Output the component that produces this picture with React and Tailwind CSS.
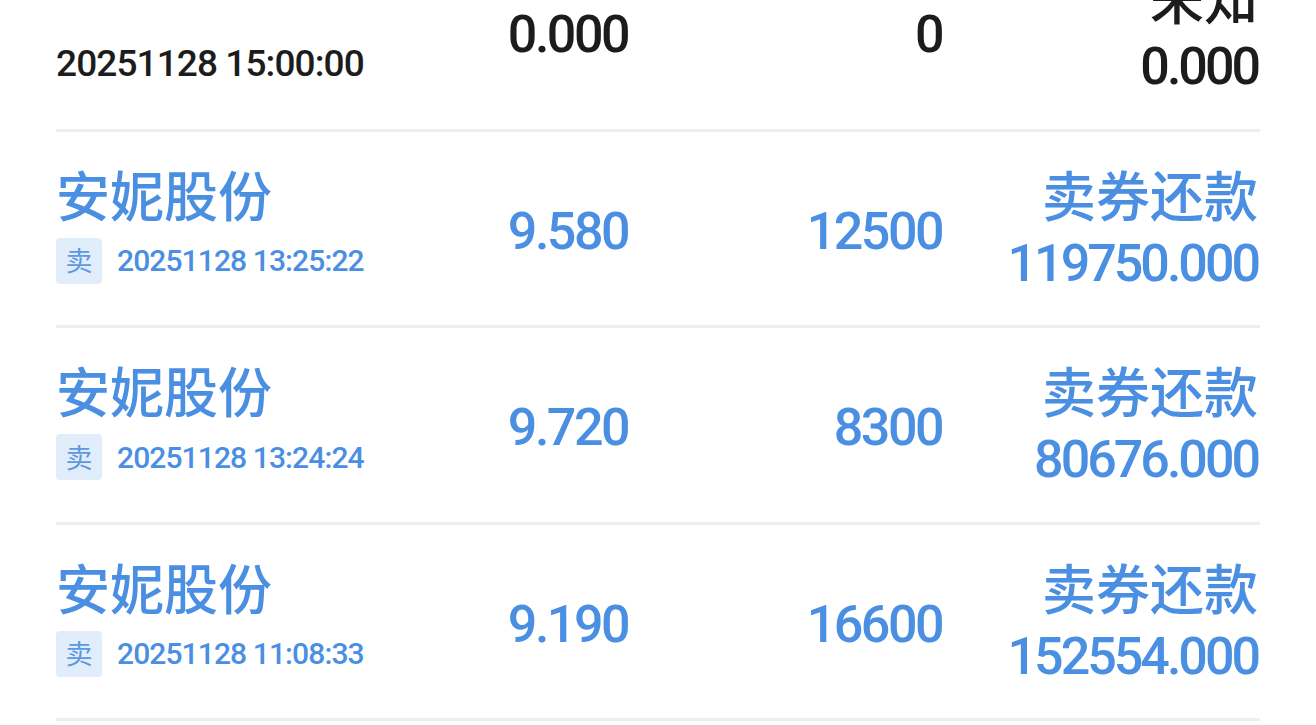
const rows = [
  { name: '', side: '', time: '20251128 15:00:00', price: '0.000', qty: '0', type: '未知', amount: '0.000', dark: true },
  { name: '安妮股份', side: '卖', time: '20251128 13:25:22', price: '9.580', qty: '12500', type: '卖券还款', amount: '119750.000' },
  { name: '安妮股份', side: '卖', time: '20251128 13:24:24', price: '9.720', qty: '8300', type: '卖券还款', amount: '80676.000' },
  { name: '安妮股份', side: '卖', time: '20251128 11:08:33', price: '9.190', qty: '16600', type: '卖券还款', amount: '152554.000' },
];

const num = { fontFamily: 'Roboto, "Noto Sans CJK SC", sans-serif' };

function Row({ r }) {
  const color = r.dark ? 'text-[#1c1c1c]' : 'text-[#4a8fe2]';
  return (
    <div className={`flex h-[196.5px] items-start border-b-[3px] border-[#eeeeee] font-medium ${color}`}>
      <div className="w-[330px] pt-[32px]">
        <div className="h-[60px] text-[54px] leading-[60px]">{r.name}</div>
        <div className="mt-[14px] flex h-[46px] items-center">
          {r.side && (
            <span className="mr-[15px] flex h-[46px] w-[46px] items-center justify-center rounded-[4px] bg-[#e2edfb] text-[27px] font-normal text-[#5d98e2]">
              {r.side}
            </span>
          )}
          {r.dark ? (
            <span className="text-[37px] tracking-[-0.9px]" style={num}>{r.time}</span>
          ) : (
            <span className="text-[30px] tracking-[-0.9px]" style={num}>{r.time}</span>
          )}
        </div>
      </div>
      <div className="w-[242px] pt-[70px] text-right text-[52px] leading-[60px] tracking-[-2.5px]" style={num}>{r.price}</div>
      <div className="w-[314px] pt-[70px] text-right text-[52px] leading-[60px] tracking-[-2.5px]" style={num}>{r.qty}</div>
      <div className="flex-1 pt-[32px] pr-[2px] text-right">
        <div className="h-[60px] text-[54px] leading-[60px]">{r.type}</div>
        <div className="mt-[10px] text-[52px] leading-[60px] tracking-[-3px]" style={num}>{r.amount}</div>
      </div>
    </div>
  );
}

export default function App() {
  return (
    <div className="h-[725px] w-[1316px] overflow-hidden bg-white" style={{ fontFamily: '"Noto Sans CJK SC", Roboto, sans-serif' }}>
      <div className="-mt-[65px] px-[56px]">
        {rows.map((r, i) => (
          <Row key={i} r={r} />
        ))}
      </div>
    </div>
  );
}
